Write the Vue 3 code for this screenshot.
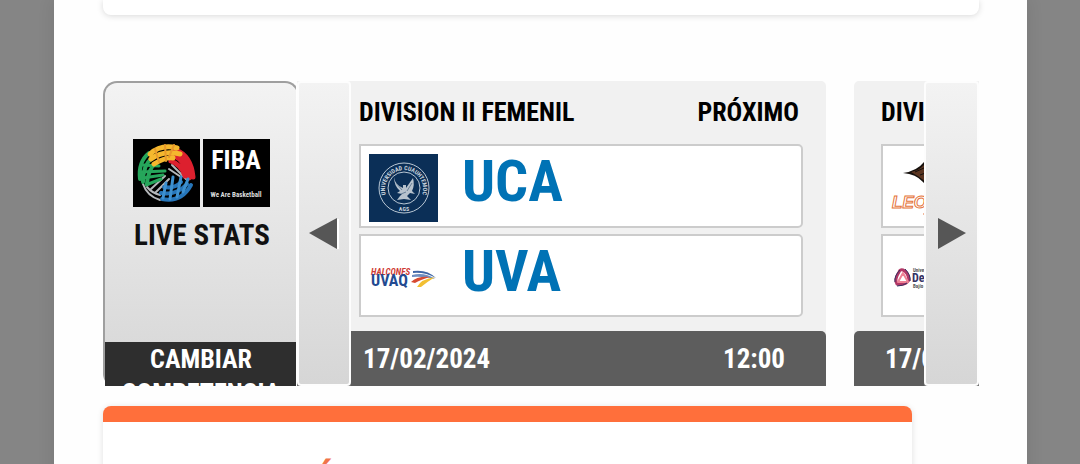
<script setup>
import { ref } from 'vue'

const track = ref(null)

const games = [
  { id: 1, division: 'DIVISION II FEMENIL', status: 'PRÓXIMO', date: '17/02/2024', time: '12:00', home: { name: 'UCA', logo: 'uca' }, away: { name: 'UVA', logo: 'uvaq' } },
  { id: 2, division: 'DIVISION II FEMENIL', status: 'PRÓXIMO', date: '17/02/2024', time: '12:00', home: { name: '', logo: 'leones' }, away: { name: '', logo: 'salle' } }
]

function scroll(dir) {
  track.value.scrollBy({ left: dir * 522, behavior: 'smooth' })
}
</script>

<template>
  <div class="page">
    <main class="content">
      <section class="top-card"></section>

      <section class="ticker">
        <div class="competition">
          <div class="competition-box">
            <svg class="fiba" viewBox="0 0 138 110" role="img" aria-label="FIBA Live Stats">
              <rect width="67" height="68" />
              <rect x="70" width="67" height="68" />
              <g fill="none" stroke-linecap="round">
                <path d="M10 45Q14 57 27 61M14 48Q19 54 27 56M18 50l14-13M22 54l14-14M39 26l14 14M42 24l12 11M36 30l12 8" stroke="#b4b7ba" stroke-width="2" />
                <path d="M43 11Q58 17 60 38M40 16Q53 22 56 39M41 13Q55 18 58 34M38 22Q49 26 52 37" stroke="#dd202e" stroke-width="5" />
                <g stroke="#26a65b" stroke-width="4">
                  <path d="M16 14Q5 23 7 40M19 19Q10 26 10 43M23 24Q15 30 14 45" />
                  <path d="M10 26l16 1M8 33l24-1M10 39l20-3M13 46l15-6" stroke-width="3" />
                </g>
                <g stroke="#f5b82e" stroke-width="5">
                  <path d="M17 15Q28 5 44 9M18 20Q30 11 47 15M21 25Q32 18 40 19" />
                  <path d="M22 10l4 13M32 6l1 16M41 6l-5 12" stroke="#e99a2b" stroke-width="2" />
                </g>
                <g stroke="#2675b9" stroke-width="4">
                  <path d="M29 60Q48 64 58 46M28 54Q43 57 54 45M31 48Q42 50 48 43" />
                  <path d="M33 44l-3 15M40 38l-3 22M48 38l-4 20M55 40l-5 13" stroke="#3d90cf" stroke-width="3" />
                </g>
              </g>
              <text class="fiba-name" x="103" y="30" text-anchor="middle">FIBA</text>
              <text class="fiba-motto" x="103" y="58" text-anchor="middle">We Are Basketball</text>
              <text class="fiba-live" x="69" y="106" text-anchor="middle">LIVE STATS</text>
            </svg>
            <button class="change" type="button">CAMBIAR COMPETENCIA</button>
          </div>
        </div>

        <div class="arrow">
          <button type="button" aria-label="Anterior" @click="scroll(-1)">
            <svg viewBox="0 0 30 34"><path d="M28 2h2v30h-2z" fill="#fff" /><path d="M0 16L28 1v31z" fill="#565656" /></svg>
          </button>
        </div>

        <div ref="track" class="track">
          <div class="games">
            <article v-for="game in games" :key="game.id" class="game">
              <header class="game-head">
                <span>{{ game.division }}</span>
                <span>{{ game.status }}</span>
              </header>
              <div class="teams">
                <div v-for="team in [game.home, game.away]" :key="team.logo" class="team">
                  <svg v-if="team.logo === 'uca'" class="logo" viewBox="0 0 69 68">
                    <rect width="69" height="68" fill="#0b2f57" />
                    <g fill="none" stroke="#b9c7d4">
                      <circle cx="35" cy="34" r="25" />
                      <circle cx="35" cy="34" r="16" />
                    </g>
                    <path id="seal-top" d="M22 49A19 19 0 1 1 48 49" fill="none" />
                    <text class="seal"><textPath href="#seal-top" startOffset="50%" text-anchor="middle">UNIVERSIDAD CUAUHTEMOC</textPath></text>
                    <text class="seal" x="35" y="57" text-anchor="middle">AGS</text>
                    <path d="M25 23Q26 31 34 34L34 31L37 31L37 34L44 24Q46 31 43 37L46 40L41 39L38 42L42 46L35 45L28 46L31 42L33 40L28 39L31 37Q25 32 25 23z" fill="#b7c2cd" />
                    <path d="M27 29l6 7M43 29l-5 8M32 40l5-2" stroke="#687f97" />
                  </svg>
                  <svg v-else-if="team.logo === 'uvaq'" class="logo" viewBox="0 0 69 68">
                    <text class="halcones" x="2" y="31">HALCONES</text>
                    <text class="uvaq" x="2" y="42">UVAQ</text>
                    <path d="M44 27Q58 25 67 34Q56 28 44 29z" fill="#3d65a5" />
                    <path d="M43 31Q56 28 66 35Q54 32 43 33z" fill="#6f8fc0" />
                    <path d="M42 38Q48 32 61 33Q51 36 46 39z" fill="#d64a31" />
                    <path d="M48 43Q52 35 66 33Q58 38 52 43z" fill="#f2bf32" />
                  </svg>
                  <svg v-else-if="team.logo === 'leones'" class="logo" viewBox="0 0 69 68">
                    <path d="M12 19Q26 17 33 8L62 6L50 42Q36 33 32 28Q25 20 12 19z" fill="#15100d" />
                    <path d="M20 18Q28 17 34 10L48 12L42 34Q31 24 20 18z" fill="#5b3521" />
                    <path d="M24 18l9-4M29 21l8-3M33 26l7-4" stroke="#15100d" />
                    <text class="leones" x="1" y="54">LEONES</text>
                    <path d="M32 60h20" stroke="#e57339" />
                  </svg>
                  <svg v-else class="logo" viewBox="0 0 69 68">
                    <g fill="none" stroke-linejoin="round">
                      <path d="M12 26Q17 28 18 36Q14 42 6 40Q3 36 8 28Q9 25 12 26z" stroke="#b13766" stroke-width="3" />
                      <path d="M12 29L17 38H7z" stroke="#ef8195" stroke-width="2" />
                      <path d="M9 26Q3 32 4 38M14 25Q20 31 19 37M6 42Q12 42 16 39" stroke="#343263" />
                    </g>
                    <text class="salle-small" x="22" y="28">Universidad</text>
                    <text class="salle" x="21" y="38">De La Salle</text>
                    <text class="salle-small" x="22" y="44">Bajío</text>
                  </svg>
                  <span class="team-name">{{ team.name }}</span>
                </div>
              </div>
              <footer class="game-foot">
                <span>{{ game.date }}</span>
                <span>{{ game.time }}</span>
              </footer>
            </article>
          </div>
        </div>

        <div class="arrow">
          <button type="button" aria-label="Siguiente" @click="scroll(1)">
            <svg viewBox="0 0 30 34"><path d="M29 16L1 1v31z" fill="#565656" /></svg>
          </button>
        </div>
      </section>

      <section class="news">
        <h2>É</h2>
      </section>
    </main>
  </div>
</template>

<style>
body { background: #858585; }
</style>

<style scoped>
* { box-sizing: border-box; }
.page {
  height: 100vh;
  overflow: hidden;
  padding: 0 53px 0 54px;
  background: #858585;
  font-family: "Liberation Sans Narrow", "Roboto Condensed", "Open Sans Condensed", "Liberation Sans", sans-serif;
  font-size: 26px;
  font-weight: 700;
  line-height: 34px;
}
.content {
  min-height: 100vh;
  padding: 0 48px 0 49px;
  background: #fefefe;
  box-shadow: 0 0 16px rgba(0, 0, 0, 0.1);
}
.top-card {
  height: 15px;
  border-radius: 0 0 8px 8px;
  background: #fff;
  box-shadow: 0 1px 6px rgba(0, 0, 0, 0.15);
}
button { padding: 0; border: 0; font: inherit; cursor: pointer; }

.ticker { display: flex; height: 305px; margin-top: 66px; }
.competition { flex: none; width: 193px; margin-right: 1px; overflow: hidden; }
.competition-box {
  display: flex;
  flex-direction: column;
  justify-content: space-between;
  width: 196px;
  height: 305px;
  padding-top: 56px;
  border: 2px solid #9f9f9f;
  border-bottom: 0;
  border-radius: 14px 14px 0 12px;
  background: linear-gradient(#f3f3f3, #d6d6d6);
}
.fiba { width: 138px; height: 110px; margin-left: 28px; }
.fiba-name { fill: #fff; font-size: 26px; }
.fiba-motto { fill: #ddd; font-size: 7px; }
.fiba-live { fill: #111; font-size: 29px; }
.change {
  display: flex;
  align-items: flex-start;
  justify-content: center;
  height: 44px;
  overflow: hidden;
  background: #2e2e2e;
  color: #fff;
  line-height: 34px;
}

.arrow { flex: none; width: 54px; background: linear-gradient(#f1f1f1 80%, #707070 80%); }
.arrow:last-child { width: 55px; }
.arrow button {
  display: flex;
  align-items: center;
  justify-content: center;
  width: 100%;
  height: 100%;
  border: 2px solid #fdfdfd;
  border-radius: 4px;
  background: linear-gradient(#f3f3f3, #d6d6d6);
}
.arrow svg { width: 30px; height: 34px; }

.track { flex: 1; min-width: 0; overflow: hidden; }
.games { display: flex; gap: 28px; margin-left: -19px; }
.game {
  flex: none;
  display: flex;
  flex-direction: column;
  width: 494px;
  height: 305px;
  border-radius: 5px 5px 0 0;
  background: #f1f1f1;
}
.game-head { display: flex; justify-content: space-between; padding: 14px 27px 15px; color: #000; }
.teams { display: flex; flex-direction: column; gap: 6px; flex: 1; padding: 0 23px 14px 27px; }
.team { display: flex; flex: 1; padding: 8px 8px 3px; border: 2px solid #ccc; border-radius: 0 5px 5px 0; background: #fff; }
.logo { flex: none; width: 69px; height: 68px; }
.team-name { margin-left: 24px; color: #0072b5; font-size: 58px; line-height: 54px; }
.game-foot {
  display: flex;
  justify-content: space-between;
  height: 55px;
  padding: 11px 41px 10px 31px;
  border-radius: 5px 5px 0 0;
  background: #5d5d5d;
  color: #fff;
  font-size: 27px;
}

.seal { fill: #c9d3dd; font-size: 6px; }
.halcones { fill: #cf3b35; font-size: 9px; font-style: italic; }
.uvaq { fill: #234a91; font-size: 16px; }
.leones { fill: #fff; stroke: #e57339; font-family: "Liberation Sans", sans-serif; font-size: 17px; font-style: italic; }
.salle { fill: #343263; font-size: 12px; }
.salle-small { fill: #555; font-size: 5px; }

.news {
  width: 809px;
  max-width: 100%;
  height: 200px;
  margin-top: 20px;
  border-top: 16px solid #ff6f3b;
  border-radius: 8px 8px 0 0;
  background: #fff;
  box-shadow: 0 1px 6px rgba(0, 0, 0, 0.12);
}
.news h2 { margin: 0; padding: 34px 0 0 212px; color: #f0744a; font-size: 36px; line-height: 48px; }
</style>
